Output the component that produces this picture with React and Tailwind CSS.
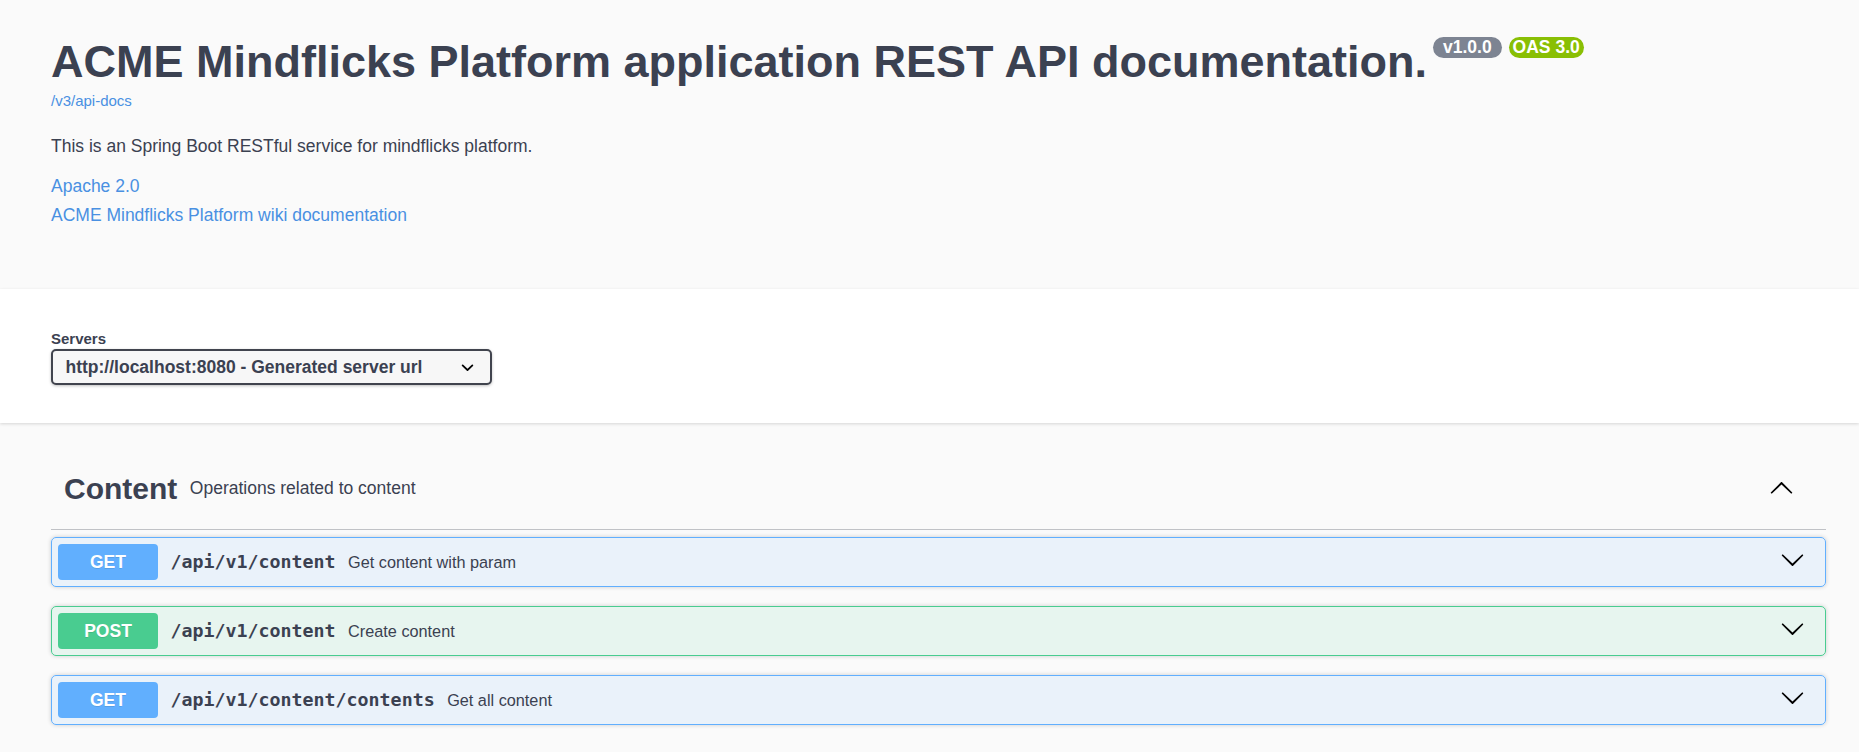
import React from "react";

const ChevronDown = ({ className = "" }) => (
  <svg className={className} width="25" height="25" viewBox="0 0 20 20" aria-hidden="true">
    <path
      fill="#000"
      d="M17.418 6.109c.272-.268.709-.268.979 0s.271.701 0 .969l-7.908 7.83c-.27.268-.707.268-.979 0l-7.908-7.83c-.27-.268-.27-.701 0-.969.271-.268.709-.268.979 0L10 13.25l7.418-7.141z"
    />
  </svg>
);

const ChevronUp = ({ className = "" }) => (
  <svg className={className} width="25" height="25" viewBox="0 0 20 20" aria-hidden="true">
    <path
      fill="#000"
      transform="rotate(180 10 10)"
      d="M17.418 6.109c.272-.268.709-.268.979 0s.271.701 0 .969l-7.908 7.83c-.27.268-.707.268-.979 0l-7.908-7.83c-.27-.268-.27-.701 0-.969.271-.268.709-.268.979 0L10 13.25l7.418-7.141z"
    />
  </svg>
);

const SelectArrow = () => (
  <svg width="25" height="25" viewBox="0 0 20 20" aria-hidden="true">
    <path
      fill="#000"
      d="M13.418 7.859a.695.695 0 01.978 0 .68.68 0 010 .969l-3.908 3.83a.697.697 0 01-.979 0l-3.908-3.83a.68.68 0 010-.969.695.695 0 01.978 0L10 11z"
    />
  </svg>
);

const ops = [
  { method: "GET", path: "/api/v1/content", desc: "Get content with param" },
  { method: "POST", path: "/api/v1/content", desc: "Create content" },
  { method: "GET", path: "/api/v1/content/contents", desc: "Get all content" },
];

function OpBlock({ method, path, desc }) {
  const isGet = method === "GET";
  return (
    <div
      className={
        "flex items-center h-[50px] px-[6px] rounded-[5px] border shadow-[0_0_4px_rgba(0,0,0,0.19)] " +
        (isGet
          ? "border-[#61affe] bg-[rgba(97,175,254,0.1)]"
          : "border-[#49cc90] bg-[rgba(73,204,144,0.1)]")
      }
    >
      <span
        className={
          "w-[100px] h-[36px] flex items-center justify-center rounded-[4px] text-white font-bold text-[17.5px] [text-shadow:0_1px_0_rgba(0,0,0,0.1)] " +
          (isGet ? "bg-[#61affe]" : "bg-[#49cc90]")
        }
      >
        {method}
      </span>
      <span className="px-[12.5px] font-['DejaVu_Sans_Mono',monospace] font-bold text-[18.3px] text-[#3b4151] whitespace-nowrap">
        {path}
      </span>
      <span className="flex-1 text-[16.25px] text-[#3b4151]">{desc}</span>
      <ChevronDown className="mr-[14px] -mt-[5px]" />
    </div>
  );
}

export default function App() {
  return (
    <div className="min-h-screen bg-[#fafafa] font-['Liberation_Sans',Arial,sans-serif] text-[#3b4151]">
      {/* Info */}
      <section className="pl-[51px] pr-[33px] pt-[36px] pb-[61px]">
        <div className="flex items-start whitespace-nowrap">
          <h2 className="m-0 text-[45px] leading-[52px] font-bold text-[#3b4151]">
            ACME Mindflicks Platform application REST API documentation.
          </h2>
          <span className="ml-[6px] mt-[1px] h-[21px] px-[10px] rounded-full bg-[#7d8492] text-white font-bold text-[17.5px] leading-[21px]">
            v1.0.0
          </span>
          <span className="ml-[7px] mt-[1px] h-[21px] px-[4px] rounded-full bg-[#89bf04] text-white font-bold text-[17.5px] leading-[21px]">
            OAS 3.0
          </span>
        </div>
        <div className="mt-[4px] text-[15px] leading-[18px]">
          <a className="text-[#4990e2]">/v3/api-docs</a>
        </div>
        <p className="mt-[23px] text-[17.5px] leading-[26px] text-[#3b4151]">
          This is an Spring Boot RESTful service for mindflicks platform.
        </p>
        <div className="mt-[14px] text-[17.5px] leading-[26px]">
          <a className="text-[#4990e2]">Apache 2.0</a>
        </div>
        <div className="mt-[3px] text-[17.5px] leading-[26px]">
          <a className="text-[#4990e2]">ACME Mindflicks Platform wiki documentation</a>
        </div>
      </section>

      {/* Servers */}
      <section className="bg-white shadow-[0_1px_3px_0_rgba(0,0,0,0.15)] pl-[51px] pr-[33px] pt-[41px] pb-[38px]">
        <div className="text-[15px] leading-[18px] font-bold text-[#3b4151]">Servers</div>
        <div className="mt-[1px] w-[441px] h-[36px] flex items-center justify-between pl-[12.5px] pr-[10px] rounded-[5px] border-2 border-[#41444e] bg-[#f7f7f7] shadow-[0_1px_3px_0_rgba(0,0,0,0.25)]">
          <span className="text-[17.5px] font-bold text-[#3b4151] whitespace-nowrap">
            http://localhost:8080 - Generated server url
          </span>
          <SelectArrow />
        </div>
      </section>

      {/* Operations */}
      <section className="pl-[51px] pr-[33px] pt-[25px] pb-[20px]">
        <div className="flex items-center h-[82px] pl-[13px] pr-[32px] border-b border-[rgba(59,65,81,0.3)]">
          <span className="text-[30px] font-bold text-[#3b4151]">Content</span>
          <span className="flex-1 px-[12.5px] text-[17.5px] text-[#3b4151]">
            Operations related to content
          </span>
          <ChevronUp />
        </div>
        <div className="mt-[7px] flex flex-col gap-[19px]">
          {ops.map((op, i) => (
            <OpBlock key={i} {...op} />
          ))}
        </div>
      </section>
    </div>
  );
}
